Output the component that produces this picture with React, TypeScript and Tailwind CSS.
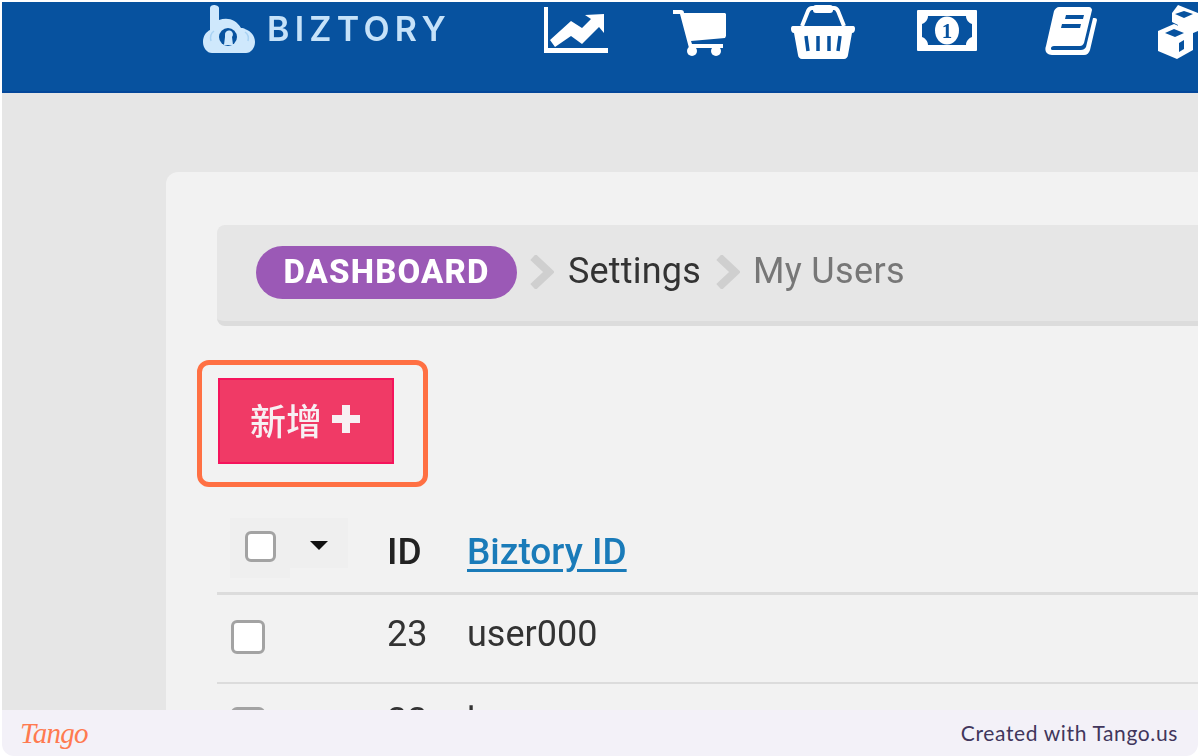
function ChartIcon() {
  return (
    <svg width="64" height="48" viewBox="0 0 64 48" className="mt-[5px] shrink-0" fill="white">
      <path d="M0 0h4v41h60v5H0z" />
      <path d="M11 40l-5-7 21-19 11 7 9-9-6-4 19-1v19l-5-6-17 17-11-8z" />
    </svg>
  );
}

function CartIcon() {
  return (
    <svg width="53" height="46" viewBox="0 0 53 46" className="mt-[8px] shrink-0" fill="white">
      <path d="M0 0h8c2 0 3 1 3 3h41l1 1v22l-1 2-34 3 1 3h31v4H16L7 4H0z" />
      <circle cx="19" cy="41" r="5" />
      <circle cx="43" cy="41" r="5" />
    </svg>
  );
}

function BasketIcon() {
  return (
    <svg width="64" height="54" viewBox="0 0 64 54" className="mt-[3px] shrink-0">
      <path d="M11 21L17 6c1-2 2-3 4-3h22c2 0 3 1 4 3l6 15" fill="none" stroke="white" strokeWidth="4" />
      <rect x="22" y="0" width="20" height="8" rx="3" fill="white" />
      <path d="M2 21h60c2 0 2 2 2 3 0 2-1 4-3 4l-4 22c0 2-2 4-4 4H11c-2 0-4-2-4-4L3 28c-2 0-3-2-3-4 0-1 0-3 2-3z" fill="white" />
      <path d="M15 31l2 15M27 31v15M38 31v15M49 31l-2 15" stroke="#07529f" strokeWidth="3.5" fill="none" />
    </svg>
  );
}

function MoneyIcon() {
  return (
    <svg width="60" height="41" viewBox="0 0 60 41" className="mt-[8px] shrink-0">
      <rect width="60" height="41" rx="1" fill="white" />
      <path d="M11 6h38c0 4 3 7 6 8v13c-3 1-6 4-6 8H11c0-4-3-7-6-8V14c3-1 6-4 6-8z" fill="#07529f" />
      <ellipse cx="30" cy="20.5" rx="12" ry="14" fill="white" />
      <text x="30" y="28" textAnchor="middle" fontSize="21" fontWeight="700" fontFamily="'Liberation Serif', serif" fill="#07529f">1</text>
    </svg>
  );
}

function BookIcon() {
  return (
    <svg width="52" height="48" viewBox="0 0 52 48" className="mt-[5px] shrink-0">
      <path d="M14 0h30c2 0 3 2 3 3l-8 33c-1 2-2 3-4 3H9c-3 0-4 3-2 4h29c2 0 4-1 5-3l7-29c2 0 4 0 4 2l-7 30c-1 3-3 5-6 5H7c-5 0-8-4-6-9L9 4c1-2 3-4 5-4z" fill="white" />
      <path d="M21 8h18l-1 4H20zM17 17h19l-1 4H16z" fill="#07529f" />
    </svg>
  );
}

function CubesIcon() {
  return (
    <svg width="42" height="54" viewBox="0 0 42 54" className="mt-[3px] shrink-0" fill="white">
      <path d="M20 0l20 8v18l-12 5-8-3V20l-6-3V8z" />
      <path d="M16 19l19 8v18l-16 9-19-8V26z" />
      <path d="M16 24l10 4-9 4-10-4z" fill="#07529f" />
      <path d="M26 35v9l-5 3v-9z" fill="#07529f" />
      <path d="M26 6l9 3-9 4-9-4z" fill="#07529f" />
    </svg>
  );
}

function Checkbox({ size }: { size: string }) {
  return <div className={`${size} shrink-0 rounded-md border-[3px] border-[#a3a3a3] bg-white`} />;
}

function Chevron() {
  return (
    <svg width="24" height="34" viewBox="0 0 24 34" className="shrink-0">
      <path d="M3 2l16 15L3 32" fill="none" stroke="#cfcfcf" strokeWidth="8" />
    </svg>
  );
}

function UserRow({ id, name, inset }: { id: string; name: string; inset: string }) {
  return (
    <div className={`flex h-[89px] items-center border-b-2 border-[#dcdcdc] text-[36px] text-[#333333] ${inset}`}>
      <div className="w-[170px] pl-[14px]">
        <Checkbox size="w-[34px] h-[34px]" />
      </div>
      <div className="mb-[6px] w-[80px]">{id}</div>
      <div className="mb-[6px]">{name}</div>
    </div>
  );
}

export default function App() {
  return (
    <div className="flex h-[756px] w-[1200px] flex-col overflow-hidden bg-white px-[2px] pt-[2px] font-['Roboto',sans-serif]">
      <header className="flex h-[91px] shrink-0 items-start overflow-hidden border-b-2 border-[#04479a] bg-[#07529f] pl-[201px]">
        <div className="flex w-[341px] shrink-0 items-start blur-[0.5px]">
          <svg width="52" height="48" viewBox="0 0 52 48" className="mt-[3px] shrink-0">
            <path d="M7 3c0-2 2-3 4-3s5 1 5 3v12c8-3 17-1 22 8 2 0 3 0 4 1 6 2 10 7 10 13 0 6-4 11-9 11H9c-5 0-9-5-9-11 0-6 3-10 7-12z" fill="#cfe8fc" />
            <circle cx="25" cy="32" r="9" fill="#07529f" />
            <path d="M22 30a4 4 0 1 1 7 2l1 8h-9l1-8z" fill="#cfe8fc" />
            <path d="M11 26c-3 2-4 6-3 10M42 27c3 2 4 5 3 9" fill="none" stroke="#a9d2f3" strokeWidth="1.5" />
          </svg>
          <span className="mt-[4px] ml-[12px] font-['Inter',sans-serif] text-[34px] leading-[46px] font-semibold tracking-[0.155em] text-[#c6e2f9]">BIZTORY</span>
        </div>
        <div className="flex w-[129px] shrink-0 blur-[0.4px]"><ChartIcon /></div>
        <div className="flex w-[118px] shrink-0 blur-[0.4px]"><CartIcon /></div>
        <div className="flex w-[126px] shrink-0 blur-[0.4px]"><BasketIcon /></div>
        <div className="flex w-[128px] shrink-0 blur-[0.4px]"><MoneyIcon /></div>
        <div className="flex w-[113px] shrink-0 blur-[0.4px]"><BookIcon /></div>
        <div className="flex shrink-0 blur-[0.4px]"><CubesIcon /></div>
      </header>

      <main className="min-h-0 flex-1 overflow-hidden bg-[#e6e6e6] pt-[79px] pl-[164px]">
        <div className="h-[600px] rounded-tl-xl bg-[#f2f2f2] pt-[53px] pl-[51px]">
          <nav className="flex h-[101px] items-center gap-[13px] rounded-l-lg border-b-[5px] border-[#dcdcdc] bg-[#e6e6e6] pb-[2px] pl-[39px]">
            <span className="flex h-[53px] w-[261px] items-center justify-center rounded-full bg-[#9b59b6] text-[33px] font-extrabold tracking-[0.035em] text-white blur-[0.3px]">DASHBOARD</span>
            <Chevron />
            <span className="mr-[2px] mb-[3px] ml-[1px] text-[36px] tracking-[0.005em] text-[#333333] blur-[0.4px]">Settings</span>
            <Chevron />
            <span className="mb-[3px] text-[36px] tracking-[0.01em] text-[#777777] blur-[0.4px]">My Users</span>
          </nav>

          <div className="relative mt-[52px] ml-[1px] h-[86px] w-[176px]">
            <button className="flex h-full w-full items-center justify-center gap-[8px] border-2 border-[#f5145c] bg-[#f03a66] pb-[4px] font-['Noto_Sans_CJK_SC',sans-serif] text-[36px] font-medium text-[#f7f0f3]">
              <span className="blur-[0.4px]">新增</span>
              <svg width="32" height="32" viewBox="0 0 32 32" className="shrink-0 blur-[0.4px]">
                <path d="M12 2h8v10h10v8H20v10h-8V20H2v-8h10z" fill="#f7f0f3" />
              </svg>
            </button>
            <div className="absolute -top-[18px] -left-[21px] h-[127px] w-[231px] rounded-xl border-[5px] border-[#ff7043]" />
          </div>

          <section className="mt-[54px]">
            <div className="flex h-[77px] border-b-[3px] border-[#dcdcdc]">
              <div className="flex w-[170px] items-start pl-[13px]">
                <div className="flex h-[60px] w-[60px] items-start bg-[#efefef] pt-[13px] pl-[15px]">
                  <Checkbox size="w-[31px] h-[31px]" />
                </div>
                <div className="flex h-[50px] w-[58px] justify-center bg-[#efefef] pt-[23px]">
                  <svg width="18" height="9" viewBox="0 0 18 9"><path d="M0 0h18l-9 9z" fill="#111111" /></svg>
                </div>
              </div>
              <div className="w-[80px] pt-[6px] text-[37px] font-medium text-[#222222] blur-[0.4px]">ID</div>
              <div className="pt-[6px] text-[37px] font-medium text-[#1a7bb9] underline underline-offset-[5px] blur-[0.4px]">Biztory ID</div>
            </div>
            <div className="blur-[0.3px]">
              <UserRow id="23" name="user000" inset="pb-[4px]" />
              <UserRow id="22" name="boss" inset="pb-[8px]" />
            </div>
          </section>
        </div>
      </main>

      <footer className="flex h-[46px] shrink-0 items-center justify-between rounded-b-xl bg-[#f3f1f8] pr-[20px] pl-[18px]">
        <span className="font-['Liberation_Serif',serif] text-[29px] leading-none tracking-tight text-[#ff7a50] italic">Tango</span>
        <span className="font-['Lato',sans-serif] text-[21px] tracking-[0.03em] text-[#41365c]">Created with Tango.us</span>
      </footer>
    </div>
  );
}
